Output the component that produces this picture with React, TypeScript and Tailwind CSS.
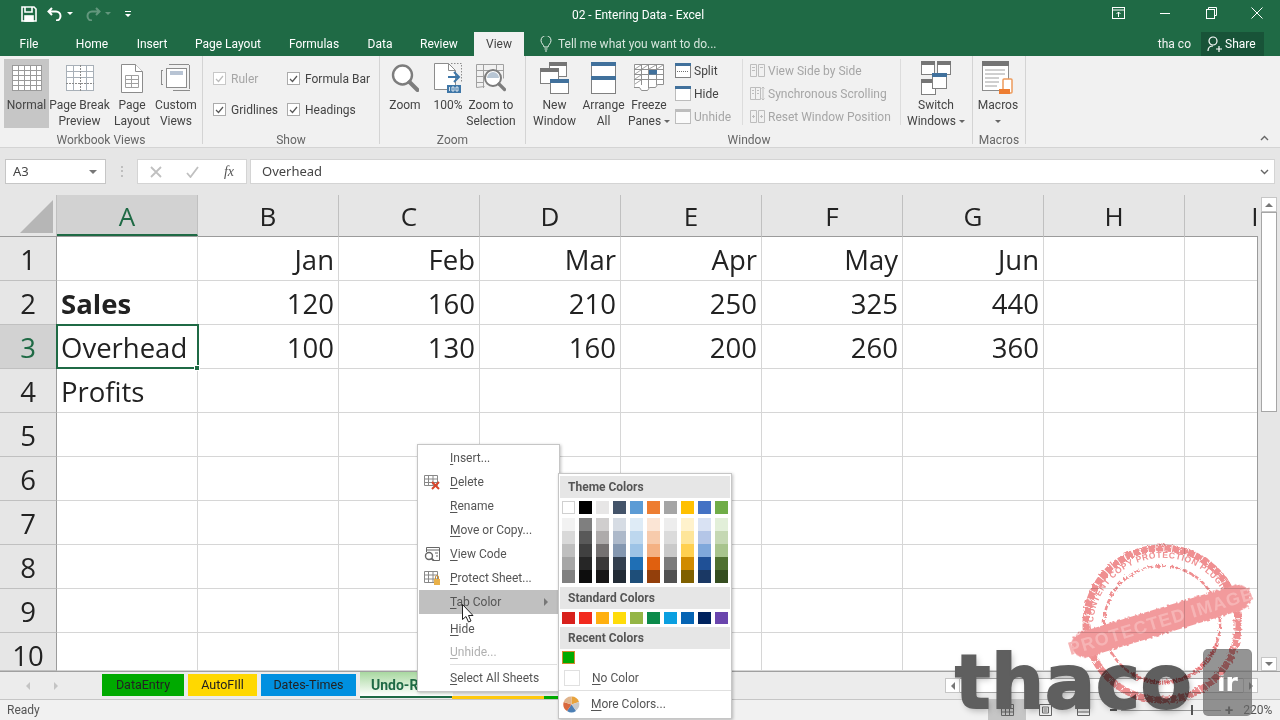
import type { ReactNode } from "react";

const columns = ["A", "B", "C", "D", "E", "F", "G", "H", "I"];

const sheetRows = [
  { n: 1, cells: ["", "Jan", "Feb", "Mar", "Apr", "May", "Jun"] },
  { n: 2, cells: ["Sales", "120", "160", "210", "250", "325", "440"] },
  { n: 3, cells: ["Overhead", "100", "130", "160", "200", "260", "360"] },
  { n: 4, cells: ["Profits"] },
  { n: 5, cells: [] },
  { n: 6, cells: [] },
  { n: 7, cells: [] },
  { n: 8, cells: [] },
  { n: 9, cells: [] },
  { n: 10, cells: [] },
];

const themeTop = [
  "bg-[#ffffff] border border-[#d0d0d0]",
  "bg-[#000000]",
  "bg-[#e7e6e6]",
  "bg-[#44546a]",
  "bg-[#5b9bd5]",
  "bg-[#ed7d31]",
  "bg-[#a5a5a5]",
  "bg-[#ffc000]",
  "bg-[#4472c4]",
  "bg-[#70ad47]",
];

const themeShades = [
  ["bg-[#f2f2f2]", "bg-[#d9d9d9]", "bg-[#bfbfbf]", "bg-[#a6a6a6]", "bg-[#808080]"],
  ["bg-[#7f7f7f]", "bg-[#595959]", "bg-[#404040]", "bg-[#262626]", "bg-[#0d0d0d]"],
  ["bg-[#d0cece]", "bg-[#aeabab]", "bg-[#757171]", "bg-[#3a3838]", "bg-[#171616]"],
  ["bg-[#d6dce4]", "bg-[#adb9ca]", "bg-[#8497b0]", "bg-[#333f4f]", "bg-[#222b35]"],
  ["bg-[#deebf6]", "bg-[#bdd7ee]", "bg-[#9dc3e6]", "bg-[#1f6fb5]", "bg-[#1e4e79]"],
  ["bg-[#fbe5d5]", "bg-[#f7cbac]", "bg-[#f4b183]", "bg-[#e0600f]", "bg-[#933f0b]"],
  ["bg-[#ededed]", "bg-[#dbdbdb]", "bg-[#c9c9c9]", "bg-[#7b7b7b]", "bg-[#525252]"],
  ["bg-[#fff2cc]", "bg-[#fee599]", "bg-[#ffd050]", "bg-[#d08a00]", "bg-[#7f6000]"],
  ["bg-[#d9e2f3]", "bg-[#b4c6e7]", "bg-[#7fa8db]", "bg-[#1f5096]", "bg-[#1a3864]"],
  ["bg-[#e2efd9]", "bg-[#c5d8b3]", "bg-[#a8c48d]", "bg-[#4f7030]", "bg-[#354d20]"],
];

const standardColors = [
  "bg-[#d8201c]",
  "bg-[#f22a1e]",
  "bg-[#ffb010]",
  "bg-[#ffdc0a]",
  "bg-[#94b545]",
  "bg-[#0b8a4a]",
  "bg-[#0a9fe0]",
  "bg-[#0564b4]",
  "bg-[#00235f]",
  "bg-[#6a45ad]",
];

function GridIcon() {
  return (
    <svg width="30" height="26" viewBox="0 0 30 26" fill="none" stroke="#9a9a9a">
      <rect x="0.5" y="0.5" width="29" height="25" fill="#fff" />
      <path d="M0 5.5h30M0 10.5h30M0 15.5h30M0 20.5h30M6.5 0v26M12.5 0v26M18.5 0v26M24.5 0v26" strokeWidth="1" />
    </svg>
  );
}

function PageBreakIcon() {
  return (
    <svg width="28" height="26" viewBox="0 0 28 26" fill="none" stroke="#a8b0b8">
      <rect x="0.5" y="0.5" width="27" height="25" fill="#fff" />
      <path d="M0 6.5h28M0 12.5h28M7.5 0v26M20.5 0v26" />
      <path d="M0 18.5h28M14.5 0v26" stroke="#8a8a8a" strokeDasharray="2 1" />
    </svg>
  );
}

function PageIcon() {
  return (
    <svg width="22" height="29" viewBox="0 0 22 29" fill="#fff" stroke="#8c8c8c">
      <path d="M0.5 0.5h14l7 7v21h-21z" />
      <path d="M14.5 0.5v7h7" />
      <path d="M4.5 11.5h13v12h-13zM4.5 15.5h13M4.5 19.5h13M10.5 11.5v12" fill="none" stroke="#a0a0a0" />
    </svg>
  );
}

function CustomViewsIcon() {
  return (
    <svg width="30" height="28" viewBox="0 0 30 28" fill="none" stroke="#8c8c8c">
      <path d="M0.5 6v15M0 6.5h2M0 20.5h2M8 0.5h20M28.5 1v24M12 26.5h17" />
      <rect x="5.5" y="4.5" width="20" height="19" fill="#fff" />
      <rect x="9" y="7" width="13" height="4" fill="#b8c4d4" stroke="none" />
    </svg>
  );
}

function MagnifierIcon() {
  return (
    <svg width="28" height="28" viewBox="0 0 28 28" fill="none">
      <circle cx="11.5" cy="11" r="9.5" stroke="#7d7d7d" strokeWidth="2.4" fill="#fff" />
      <path d="M18.5 18l8 8" stroke="#7d7d7d" strokeWidth="4" strokeLinecap="round" />
    </svg>
  );
}

function HundredIcon() {
  return (
    <svg width="28" height="30" viewBox="0 0 28 30" fill="none">
      <path d="M0.5 0.5h14l7 7v19h-21z" fill="#fff" stroke="#8c8c8c" />
      <path d="M14.5 0.5v7h7" stroke="#8c8c8c" />
      <path d="M17 0.5h10.5v18" stroke="#8c8c8c" strokeDasharray="1.5 1.5" />
      <path d="M14 14h11M20 9l5 5-5 5" stroke="#3f77a8" strokeWidth="2" />
      <rect x="13" y="22" width="14" height="8" fill="#3f77a8" />
      <path d="M15.5 24v4M18 24h2v4h-2zM22 24h2v4h-2z" stroke="#fff" strokeWidth="0.8" />
    </svg>
  );
}

function ZoomSelectionIcon() {
  return (
    <svg width="30" height="28" viewBox="0 0 30 28" fill="none">
      <path d="M0.5 0.5h27v14M0.5 0.5v23l8-1M0 6.5h28M7.5 0v24M0 12.5h10M0 18.5h8M20.5 0v6" stroke="#a0a0a0" />
      <circle cx="17" cy="14" r="8" fill="#fff" stroke="#7d7d7d" strokeWidth="2" />
      <path d="M11 14a6 6 0 0112 0z" fill="#b8c6d4" />
      <path d="M23 20l5.5 5.5" stroke="#7d7d7d" strokeWidth="3.2" strokeLinecap="round" />
    </svg>
  );
}

function NewWindowIcon() {
  return (
    <svg width="30" height="32" viewBox="0 0 30 32" fill="none">
      <rect x="9.5" y="0.5" width="17" height="14" fill="#fff" stroke="#808080" />
      <rect x="9" y="0" width="18" height="4" fill="#757575" />
      <rect x="0.5" y="6.5" width="18" height="15" fill="#fff" stroke="#808080" />
      <rect x="0" y="6" width="19" height="4" fill="#757575" />
      <rect x="10.5" y="17.5" width="18" height="14" fill="#fff" stroke="#808080" />
      <rect x="10" y="17" width="19" height="4" fill="#41719c" />
    </svg>
  );
}

function ArrangeIcon() {
  return (
    <svg width="25" height="32" viewBox="0 0 25 32" fill="none">
      <rect x="0.5" y="0.5" width="24" height="31" fill="#fff" stroke="#808080" />
      <rect x="0" y="0" width="25" height="4" fill="#41719c" />
      <rect x="0" y="14" width="25" height="4" fill="#41719c" />
    </svg>
  );
}

function FreezeIcon() {
  return (
    <svg width="30" height="28" viewBox="0 0 30 28" fill="none" stroke="#909090">
      <path d="M0.5 0.5h29v20h-6l-2 3h-6l-2 3h-6l-2-3h-5.5z" fill="#fff" />
      <path d="M0 5.5h30M0 10.5h30M0 15.5h30M7.5 0v21M14.5 0v24M22.5 0v21" />
      <path d="M1 5l6-4M8 5l6-4M15 5l7-4M23 5l6-4M1 10l6-4M1 15l6-4M1 20l6-4" stroke="#a0a0a0" />
      <rect x="15" y="6" width="8" height="4.5" fill="#41719c" stroke="none" />
    </svg>
  );
}

function SplitIcon() {
  return (
    <svg width="16" height="15" viewBox="0 0 16 15" fill="none">
      <rect x="0.5" y="0.5" width="15" height="14" fill="#fff" stroke="#808080" />
      <rect x="0" y="0" width="16" height="3" fill="#41719c" />
      <path d="M2 8.5h12" stroke="#707070" strokeDasharray="1 1" />
    </svg>
  );
}

function HideIcon() {
  return (
    <svg width="16" height="15" viewBox="0 0 16 15" fill="none">
      <rect x="0.5" y="0.5" width="15" height="14" fill="#fff" stroke="#808080" strokeDasharray="1 1" />
      <rect x="0" y="0" width="16" height="3" fill="#41719c" />
    </svg>
  );
}

function UnhideIcon() {
  return (
    <svg width="16" height="15" viewBox="0 0 16 15" fill="none">
      <rect x="0.5" y="0.5" width="15" height="14" fill="#fafafa" stroke="#bdbdbd" />
      <rect x="0" y="0" width="16" height="3" fill="#bdbdbd" />
    </svg>
  );
}

function SideBySideIcon() {
  return (
    <svg width="15" height="13" viewBox="0 0 15 13" fill="none" stroke="#bdbdbd">
      <path d="M0.5 0.5h6v12h-6zM8.5 0.5h6v12h-6zM2 3.5h3M2 6.5h3M10 3.5h3" />
    </svg>
  );
}

function SyncIcon() {
  return (
    <svg width="15" height="15" viewBox="0 0 15 15" fill="none" stroke="#bdbdbd">
      <path d="M0.5 1.5h5v12h-5zM5.5 1.5h5v12h-5zM2 4.5h2M2 7.5h2M7 4.5h2M7 7.5h2M13 1v13M11.5 2.5L13 1l1.5 1.5M11.5 12.5L13 14l1.5-1.5" />
    </svg>
  );
}

function ResetIcon() {
  return (
    <svg width="15" height="13" viewBox="0 0 15 13" fill="none" stroke="#bdbdbd">
      <path d="M0.5 0.5h6v12h-6zM8.5 0.5h6v12h-6zM2 6.5h3M10 6.5h3M11.5 5v3M3.5 5v3" />
    </svg>
  );
}

function SwitchIcon() {
  return (
    <svg width="30" height="34" viewBox="0 0 30 34" fill="none">
      <rect x="0.5" y="0.5" width="13" height="13" fill="#fff" stroke="#808080" />
      <rect x="0" y="0" width="14" height="4" fill="#757575" />
      <rect x="16.5" y="0.5" width="13" height="13" fill="#fff" stroke="#808080" />
      <rect x="16" y="0" width="14" height="4" fill="#757575" />
      <rect x="0.5" y="18.5" width="14" height="15" fill="#fff" stroke="#808080" />
      <rect x="0" y="18" width="15" height="4" fill="#757575" />
      <rect x="11.5" y="12.5" width="14" height="15" fill="#fff" stroke="#808080" />
      <rect x="11" y="12" width="15" height="4" fill="#41719c" />
    </svg>
  );
}

function MacrosIcon() {
  return (
    <svg width="32" height="34" viewBox="0 0 32 34" fill="none">
      <rect x="0.5" y="0.5" width="26" height="29" fill="#fff" stroke="#8c8c8c" />
      <rect x="0" y="0" width="27" height="5" fill="#757575" />
      <path d="M3 9h20M3 13h20M3 17h14M3 21h14M3 25h12" stroke="#a0a0a0" />
      <rect x="21" y="18" width="9" height="14" rx="1" fill="#fff" stroke="#ed9b5c" strokeWidth="1.5" />
      <rect x="17" y="28" width="11" height="5" fill="#ed7d31" />
    </svg>
  );
}

function Dropdown({ light }: { light?: boolean }) {
  return (
    <span
      className={`inline-block w-0 h-0 border-x-[3px] border-x-transparent border-t-[3px] align-middle ${
        light ? "border-t-white" : "border-t-[#666]"
      }`}
    />
  );
}

function BigButton({
  icon,
  lines,
  width,
  active,
}: {
  icon: ReactNode;
  lines: ReactNode[];
  width: string;
  active?: boolean;
}) {
  return (
    <div className={`${width} ${active ? "bg-[#c6c6c6]" : ""} h-[69px] shrink-0 flex flex-col items-center`}>
      <div className="h-[38px] shrink-0 flex items-center justify-center">{icon}</div>
      <div className="text-center leading-[16px] whitespace-nowrap">
        {lines.map((l, i) => (
          <div key={i}>{l}</div>
        ))}
      </div>
    </div>
  );
}

function Group({ label, width, children }: { label: string; width: string; children: ReactNode }) {
  return (
    <div className={`${width} h-[88px] shrink-0 flex flex-col border-r border-[#d4d4d4]`}>
      <div className="h-[72px] shrink-0 pt-[3px] flex">{children}</div>
      <div className="shrink-0 text-center text-[#666] leading-[16px] mt-[4px]">{label}</div>
    </div>
  );
}

function CheckBox({ label, disabled }: { label: string; disabled?: boolean }) {
  return (
    <div className={`flex items-center gap-[5px] ${disabled ? "text-[#a6a6a6]" : ""}`}>
      <span
        className={`w-[13px] h-[13px] bg-white border flex items-center justify-center ${
          disabled ? "border-[#c8c8c8]" : "border-[#ababab]"
        }`}
      >
        <svg width="9" height="8" viewBox="0 0 9 8" fill="none" stroke={disabled ? "#bbb" : "#555"} strokeWidth="1.2">
          <path d="M1 4l2.5 2.5L8 1" />
        </svg>
      </span>
      {label}
    </div>
  );
}

function SmallRow({ icon, label, disabled }: { icon: ReactNode; label: string; disabled?: boolean }) {
  return (
    <div className={`h-[23px] flex items-center gap-[3px] whitespace-nowrap ${disabled ? "text-[#a6a6a6]" : ""}`}>
      <span className="w-[16px] flex justify-center">{icon}</span>
      {label}
    </div>
  );
}

function Ribbon() {
  return (
    <div className="h-[92px] bg-[#f1f1f1] border-b border-[#d4d4d4] flex text-[12px] text-[#444]">
      <Group label="Workbook Views" width="w-[203px]">
        <div className="flex pl-[4px]">
          <BigButton width="w-[45px]" active icon={<GridIcon />} lines={["Normal"]} />
          <BigButton width="w-[61px]" icon={<PageBreakIcon />} lines={["Page Break", "Preview"]} />
          <BigButton width="w-[44px]" icon={<PageIcon />} lines={["Page", "Layout"]} />
          <BigButton width="w-[44px]" icon={<CustomViewsIcon />} lines={["Custom", "Views"]} />
        </div>
      </Group>
      <Group label="Show" width="w-[177px]">
        <div className="grid grid-cols-[74px_auto] grid-rows-[31px_31px] items-center pl-[10px] pt-[4px]">
          <CheckBox label="Ruler" disabled />
          <CheckBox label="Formula Bar" />
          <CheckBox label="Gridlines" />
          <CheckBox label="Headings" />
        </div>
      </Group>
      <Group label="Zoom" width="w-[146px]">
        <div className="flex">
          <BigButton width="w-[50px]" icon={<MagnifierIcon />} lines={["Zoom"]} />
          <BigButton width="w-[36px]" icon={<HundredIcon />} lines={["100%"]} />
          <BigButton width="w-[50px]" icon={<ZoomSelectionIcon />} lines={["Zoom to", "Selection"]} />
        </div>
      </Group>
      <Group label="Window" width="w-[447px]">
        <div className="flex">
          <BigButton width="w-[57px]" icon={<NewWindowIcon />} lines={["New", "Window"]} />
          <BigButton width="w-[41px]" icon={<ArrangeIcon />} lines={["Arrange", "All"]} />
          <BigButton
            width="w-[50px]"
            icon={<FreezeIcon />}
            lines={[
              "Freeze",
              <>
                Panes <Dropdown />
              </>,
            ]}
          />
          <div className="w-[67px] shrink-0 ml-[1px]">
            <SmallRow icon={<SplitIcon />} label="Split" />
            <SmallRow icon={<HideIcon />} label="Hide" />
            <SmallRow icon={<UnhideIcon />} label="Unhide" disabled />
          </div>
          <div className="w-[159px] shrink-0 h-[66px] border-x border-[#dcdcdc] pl-[6px]">
            <SmallRow icon={<SideBySideIcon />} label="View Side by Side" disabled />
            <SmallRow icon={<SyncIcon />} label="Synchronous Scrolling" disabled />
            <SmallRow icon={<ResetIcon />} label="Reset Window Position" disabled />
          </div>
          <BigButton
            width="w-[70px]"
            icon={<SwitchIcon />}
            lines={[
              "Switch",
              <>
                Windows <Dropdown />
              </>,
            ]}
          />
        </div>
      </Group>
      <Group label="Macros" width="w-[53px]">
        <BigButton width="w-[50px]" icon={<MacrosIcon />} lines={["Macros", <Dropdown />]} />
      </Group>
      <div className="flex-1 flex items-end justify-end pr-[11px] pb-[6px]">
        <svg width="9" height="6" viewBox="0 0 9 6" fill="none" stroke="#666" strokeWidth="1.4">
          <path d="M1 5l3.5-3.5L8 5" />
        </svg>
      </div>
    </div>
  );
}

function TitleBar() {
  return (
    <div className="h-[32px] grid grid-cols-[1fr_auto_1fr] text-white">
      <div className="flex items-center pb-[5px] pl-[21px] gap-[10px]">
        <svg width="16" height="16" viewBox="0 0 16 16" fill="none" stroke="#fff" strokeWidth="1.6">
          <path d="M1 1h12l2 2v12H1z" />
          <path d="M4 1v5h7V1" />
          <rect x="4" y="10" width="8" height="5" fill="#fff" />
        </svg>
        <div className="flex items-center gap-[4px]">
          <svg width="16" height="14" viewBox="0 0 16 14" fill="none" stroke="#fff" strokeWidth="2">
            <path d="M5 1L1.5 4.5 5 8M2 4.5h7a4.5 4.5 0 010 9" />
          </svg>
          <Dropdown light />
        </div>
        <div className="flex items-center gap-[4px] opacity-30 ml-[2px]">
          <svg width="16" height="14" viewBox="0 0 16 14" fill="none" stroke="#fff" strokeWidth="2">
            <path d="M11 1l3.5 3.5L11 8M14 4.5H7a4.5 4.5 0 000 9" />
          </svg>
          <Dropdown light />
        </div>
        <svg className="ml-[3px]" width="8" height="8" viewBox="0 0 8 8" fill="#fff">
          <path d="M1 1h6v1H1zM1 4h6L4 7z" />
        </svg>
      </div>
      <div className="text-[12px] leading-[30px] pr-[4px]">02 - Entering Data - Excel</div>
      <div className="flex items-start justify-end text-white">
        <div className="w-[46px] h-[26px] flex items-center justify-center mr-[1px]">
          <svg width="13" height="12" viewBox="0 0 13 12" fill="none" stroke="#fff">
            <rect x="0.5" y="0.5" width="12" height="11" />
            <path d="M0 3h13M6.5 10V5M4.5 7l2-2 2 2" />
          </svg>
        </div>
        <div className="w-[46px] h-[26px] flex items-center justify-center">
          <div className="w-[10px] h-px bg-white" />
        </div>
        <div className="w-[46px] h-[26px] flex items-center justify-center">
          <svg width="11" height="12" viewBox="0 0 11 12" fill="none" stroke="#fff">
            <rect x="0.5" y="2.5" width="8" height="9" />
            <path d="M2.5 2V0.5h8v8H9" />
          </svg>
        </div>
        <div className="w-[46px] h-[26px] flex items-center justify-center">
          <svg width="12" height="12" viewBox="0 0 12 12" stroke="#fff">
            <path d="M0.5 0.5l11 11M11.5 0.5l-11 11" />
          </svg>
        </div>
      </div>
    </div>
  );
}

function TabRow() {
  const tabs = [
    { name: "File", w: "w-[58px]" },
    { name: "Home", w: "w-[56px]" },
    { name: "Insert", w: "w-[56px]" },
    { name: "Page Layout", w: "w-[88px]" },
    { name: "Formulas", w: "w-[76px]" },
    { name: "Data", w: "w-[48px]" },
    { name: "Review", w: "w-[62px]" },
  ];
  return (
    <div className="h-[24px] flex text-[12px] text-white">
      {tabs.map((t, i) => (
        <div key={t.name} className={`${t.w} ${i === 0 ? "mr-[6px]" : "mr-[4px]"} text-center leading-[24px]`}>
          {t.name}
        </div>
      ))}
      <div className="w-[50px] bg-[#f1f1f1] text-[#444] text-center leading-[24px]">View</div>
      <div className="flex items-center ml-[16px] gap-[6px] text-[#d5e5dc]">
        <svg width="12" height="16" viewBox="0 0 12 16" fill="none" stroke="#e6efe9">
          <path d="M4 11c0-2-3-3.5-3-6.5a5 5 0 0110 0C11 7.5 8 9 8 11zM4.5 13h3M5 15h2" />
        </svg>
        Tell me what you want to do...
      </div>
      <div className="ml-auto mr-[10px] leading-[24px] text-[#f2f2f2]">tha co</div>
      <div className="w-[63px] h-[24px] mr-[16px] bg-[#185338] flex items-center pl-[6px] gap-[3px]">
        <svg width="15" height="16" viewBox="0 0 15 16" fill="none" stroke="#fff" strokeWidth="1.2">
          <circle cx="6" cy="5" r="4" />
          <path d="M1 15c0-3.5 2-5 5-5M9 13h6M12 10v6" />
        </svg>
        Share
      </div>
    </div>
  );
}

function FormulaBar() {
  return (
    <div className="h-[47px] bg-[#e6e6e6] shrink-0 flex items-start pt-[11px] pl-[5px] pr-[5px] font-['Noto_Sans',sans-serif] text-[13px] text-[#444]">
      <div className="w-[101px] h-[25px] bg-white border border-[#c6c6c6] flex items-center justify-between pl-[7px] pr-[8px]">
        A3
        <span className="w-0 h-0 border-x-[4px] border-x-transparent border-t-[4px] border-t-[#777]" />
      </div>
      <div className="w-[31px] flex justify-center text-[#aaa] leading-[24px] text-[12px]">⋮</div>
      <div className="w-[110px] h-[25px] bg-white border border-[#d4d4d4] flex items-center px-[12px] justify-between">
        <svg width="12" height="12" viewBox="0 0 12 12" stroke="#c0c0c0" strokeWidth="1.8">
          <path d="M1 1l10 10M11 1L1 11" />
        </svg>
        <svg width="13" height="12" viewBox="0 0 13 12" fill="none" stroke="#c0c0c0" strokeWidth="1.8">
          <path d="M1 7l3.5 4L12 1" />
        </svg>
        <span className="font-['Liberation_Serif',serif] italic text-[14px] text-[#555]">fx</span>
      </div>
      <div className="flex-1 ml-[3px] h-[25px] bg-white border border-[#d4d4d4] flex items-center justify-between pl-[11px] pr-[5px]">
        Overhead
        <svg width="9" height="6" viewBox="0 0 9 6" fill="none" stroke="#666" strokeWidth="1.4">
          <path d="M1 1l3.5 3.5L8 1" />
        </svg>
      </div>
    </div>
  );
}

function Sheet() {
  return (
    <div className="flex h-[476px] bg-[#e6e6e6] shrink-0 font-['Open_Sans',sans-serif]">
      <div className="w-[1258px] shrink-0 flex flex-col overflow-hidden">
        <div className="h-[41px] shrink-0 flex text-[26px] text-[#222] leading-[43px]">
          <div className="w-[57px] shrink-0 flex items-end justify-end pr-[3px] pb-[3px] border-r border-[#c0c0c0]">
            <span className="w-0 h-0 border-l-[33px] border-l-transparent border-b-[33px] border-b-[#b6b6b6]" />
          </div>
          {columns.map((c, i) => (
            <div
              key={c}
              className={`w-[141px] shrink-0 text-center border-r border-[#c0c0c0] ${
                i === 0 ? "bg-[#d2d2d2] text-[#1f6a45] border-b-2 border-b-[#1f6a45]" : ""
              }`}
            >
              {c}
            </div>
          ))}
        </div>
        <div className="flex-1 flex flex-col border-r border-[#9b9b9b] w-[1258px] overflow-hidden">
          {sheetRows.map((r) => (
            <div
              key={r.n}
              className={`${r.n === 1 ? "h-[45px]" : r.n === 10 ? "h-[38px]" : "h-[44px]"} shrink-0 flex text-[27.5px] text-[#222] ${
                r.n === 10 ? "leading-[30px]" : "leading-[46px]"
              }`}
            >
              <div
                className={`w-[57px] shrink-0 text-center border-r border-[#9b9b9b] border-b border-b-[#c0c0c0] ${
                  r.n === 1 ? "border-t border-t-[#9b9b9b]" : ""
                } ${r.n === 3 ? "bg-[#d2d2d2] text-[#1f6a45]" : ""} ${r.n === 10 ? "pt-[8px]" : ""}`}
              >
                {r.n}
              </div>
              {columns.map((c, i) => (
                <div
                  key={c}
                  className={`relative w-[141px] shrink-0 bg-white border-r border-b border-[#d6d6d6] ${
                    r.n === 1 ? "border-t border-t-[#9b9b9b]" : ""
                  } ${i === 0 ? "pl-[4px] text-left" : "pr-[4px] text-right"} ${
                    r.n === 2 && i === 0 ? "font-bold" : ""
                  }`}
                >
                  {r.cells[i] ?? ""}
                  {r.n === 3 && i === 0 && (
                    <>
                      <span className="absolute z-10 -left-px -top-px w-[143px] h-[45px] border-2 border-[#1f6a45]" />
                      <span className="absolute z-10 -right-[3px] -bottom-[3px] w-[6px] h-[6px] bg-[#1f6a45] border border-white" />
                    </>
                  )}
                </div>
              ))}
            </div>
          ))}
        </div>
      </div>
      <div className="flex-1 flex flex-col items-center pt-[2px]">
        <div className="w-[16px] h-[15px] bg-white border border-[#c6c6c6] flex items-center justify-center">
          <span className="w-0 h-0 border-x-[4px] border-x-transparent border-b-[4px] border-b-[#777]" />
        </div>
        <div className="w-[16px] h-[200px] bg-white border border-[#a6a6a6]" />
        <div className="flex-1" />
        <div className="w-[16px] h-[14px] bg-white border border-[#c6c6c6] flex items-center justify-center">
          <span className="w-0 h-0 border-x-[4px] border-x-transparent border-t-[4px] border-t-[#777]" />
        </div>
      </div>
    </div>
  );
}

function SheetTab({ name, width, color }: { name: string; width: string; color: string }) {
  return <div className={`${width} ${color} h-[22px] shrink-0 mr-[4px] text-center leading-[22px]`}>{name}</div>;
}

function TabBar() {
  return (
    <div className="h-[28px] shrink-0 bg-[#ececec] border-t border-[#a0a0a0] flex text-[12.5px] text-[#222]">
      <div className="w-[102px] shrink-0 pl-[26px] flex items-center gap-[24px]">
        <span className="w-0 h-0 border-y-[4px] border-y-transparent border-r-[4px] border-r-[#c4c4c4]" />
        <span className="w-0 h-0 border-y-[4px] border-y-transparent border-l-[4px] border-l-[#c4c4c4]" />
      </div>
      <div className="flex pt-[2px] w-[843px] shrink-0 overflow-hidden">
        <SheetTab name="DataEntry" width="w-[82px]" color="bg-[#00aa00]" />
        <SheetTab name="AutoFIll" width="w-[69px]" color="bg-[#ffd800]" />
        <SheetTab name="Dates-Times" width="w-[95px]" color="bg-[#0090e0]" />
        <div className="w-[93px] h-[26px] shrink-0 bg-linear-to-b from-[#a8d8a0] to-white border-b-2 border-[#1f6a45] text-[14px] text-[#1f6a45] font-bold pl-[11px] leading-[22px] -mr-[1px] -mt-[2px] pt-[2px]">
          Undo-Redo
        </div>
        <div className="w-[92px] h-[25px] shrink-0 border-b-[3px] border-[#ffc90e]" />
        <div className="w-[30px] h-[25px] shrink-0 border-b-[3px] border-[#00aa00]" />
      </div>
      <div className="flex-1 flex pt-[6px] pr-[22px]">
        <div className="w-[15px] h-[15px] bg-white border border-[#c6c6c6] flex items-center justify-center">
          <span className="w-0 h-0 border-y-[4px] border-y-transparent border-r-[4px] border-r-[#777]" />
        </div>
        <div className="flex-1 h-[15px] bg-white border-y border-[#a6a6a6]" />
        <div className="w-[15px] h-[15px] bg-white border border-[#c6c6c6] flex items-center justify-center">
          <span className="w-0 h-0 border-y-[4px] border-y-transparent border-l-[4px] border-l-[#777]" />
        </div>
      </div>
    </div>
  );
}

function StatusBar() {
  return (
    <div className="flex-1 bg-[#f1f1f1] border-t border-[#c6c6c6] flex items-center text-[12px] text-[#555]">
      <div className="pl-[7px] w-[988px] shrink-0">Ready</div>
      <div className="w-[38px] h-full bg-[#c6c6c6] flex items-center justify-center">
        <svg width="13" height="12" viewBox="0 0 13 12" fill="none" stroke="#666">
          <path d="M0.5 0.5h12v11h-12zM0 4.5h13M0 8h13M4.5 0v12M8.5 0v12" />
        </svg>
      </div>
      <div className="w-[38px] flex justify-center">
        <svg width="13" height="12" viewBox="0 0 13 12" fill="none" stroke="#666">
          <path d="M0.5 0.5h12v11h-12zM3.5 3h6v6h-6zM4.5 5h4M4.5 7h4" />
        </svg>
      </div>
      <div className="w-[38px] flex justify-center">
        <svg width="13" height="12" viewBox="0 0 13 12" fill="none" stroke="#666">
          <path d="M0.5 4.5h12v7h-12zM3.5 4.5V0.5h6v4M0 8h13" />
        </svg>
      </div>
      <div className="w-[7px] h-[2px] bg-[#555] ml-[8px]" />
      <div className="relative w-[100px] h-px bg-[#999] mx-[4px]">
        <span className="absolute left-[70px] -top-[5px] w-[2px] h-[10px] bg-[#555]" />
      </div>
      <span className="text-[15px] leading-none font-bold">+</span>
      <span className="ml-[10px]">220%</span>
    </div>
  );
}

function MenuItem({
  first,
  rest,
  icon,
  active,
  disabled,
  tall,
}: {
  first: string;
  rest: string;
  icon?: ReactNode;
  active?: boolean;
  disabled?: boolean;
  tall?: boolean;
}) {
  return (
    <div
      className={`relative ${tall ? "h-[26px] pt-[3px]" : "h-[24px]"} flex items-center ${
        active ? "bg-[#c0c0c0]" : ""
      } ${disabled ? "text-[#b0b0b0]" : ""}`}
    >
      <span className="w-[31px] flex justify-center pr-[5px]">{icon}</span>
      <span>
        <span className="underline underline-offset-2">{first}</span>
        {rest}
      </span>
      {active && (
        <span className="absolute right-[10px] w-0 h-0 border-y-[4px] border-y-transparent border-l-[4px] border-l-[#777]" />
      )}
    </div>
  );
}

function ContextMenu() {
  return (
    <div className="absolute left-[417px] top-[444px] w-[143px] h-[248px] bg-white border border-[#c6c6c6] shadow-[1px_1px_3px_rgba(0,0,0,0.25)] pt-[1px] px-px text-[12px] text-[#555]">
      <MenuItem first="I" rest="nsert..." />
      <MenuItem
        first="D"
        rest="elete"
        icon={
          <svg width="17" height="15" viewBox="0 0 17 15" fill="none">
            <path d="M0.5 0.5h13v10h-13zM0 4h14M0 7.5h14M4.5 0v11M9 0v11" stroke="#888" />
            <path d="M8 7l7 7M15 7l-7 7" stroke="#d8452a" strokeWidth="2" />
          </svg>
        }
      />
      <MenuItem first="R" rest="ename" />
      <MenuItem first="M" rest="ove or Copy..." />
      <MenuItem
        first="V"
        rest="iew Code"
        icon={
          <svg width="16" height="14" viewBox="0 0 16 14" fill="none" stroke="#666">
            <path d="M2.5 5V0.5h13v13H10M2 3h14M11 6h3M12 9h2" />
            <circle cx="5" cy="9" r="3.5" strokeWidth="1.4" />
            <path d="M7.5 11.5L10 14" strokeWidth="1.8" />
          </svg>
        }
      />
      <MenuItem
        first="P"
        rest="rotect Sheet..."
        icon={
          <svg width="17" height="15" viewBox="0 0 17 15" fill="none">
            <path d="M0.5 0.5h13v11h-13zM0 4h14M0 8h14M4.5 0v12M9 0v12" stroke="#888" />
            <rect x="10" y="8" width="6" height="6" fill="#e8b048" />
            <path d="M11.5 8V6a1.5 1.5 0 013 0v2" stroke="#c89038" />
          </svg>
        }
      />
      <MenuItem first="T" rest="ab Color" active />
      <MenuItem first="H" rest="ide" tall />
      <MenuItem first="U" rest="nhide..." disabled />
      <div className="h-px bg-[#e0e0e0] ml-[31px] mr-[1px]" />
      <div className="pt-[1px]">
        <MenuItem first="S" rest="elect All Sheets" />
      </div>
      <svg className="absolute left-[44px] top-[159px]" width="12" height="19" viewBox="0 0 12 19">
        <path d="M0.5 0.5v15l3.5-3 2.5 5.5 2.5-1-2.5-5.500h4.500z" fill="#fff" stroke="#222" />
      </svg>
    </div>
  );
}

function ColorHeader({ label }: { label: string }) {
  return (
    <div className="h-[22px] mx-px bg-[#e6e6e6] pl-[8px] font-bold text-[12px] leading-[22px] text-[#555]">{label}</div>
  );
}

function ColorSubmenu() {
  return (
    <div className="absolute left-[558px] top-[473px] w-[174px] h-[246px] bg-white border border-[#c6c6c6] shadow-[1px_1px_3px_rgba(0,0,0,0.25)] pt-[2px] text-[12px] text-[#555]">
      <ColorHeader label="Theme Colors" />
      <div className="flex gap-[4px] pl-[3px] pt-[3px]">
        {themeTop.map((c, i) => (
          <span key={i} className={`${c} w-[13px] h-[13px]`} />
        ))}
      </div>
      <div className="flex gap-[4px] pl-[3px] pt-[4px]">
        {themeShades.map((col, i) => (
          <div key={i} className="w-[13px] flex flex-col">
            {col.map((c) => (
              <span key={c} className={`${c} h-[13px]`} />
            ))}
          </div>
        ))}
      </div>
      <div className="mt-[4px]">
        <ColorHeader label="Standard Colors" />
      </div>
      <div className="flex gap-[4px] pl-[3px] pt-[3px]">
        {standardColors.map((c) => (
          <span key={c} className={`${c} w-[13px] h-[12px]`} />
        ))}
      </div>
      <div className="mt-[3px]">
        <ColorHeader label="Recent Colors" />
      </div>
      <div className="pl-[3px] pt-[2px]">
        <span className="block w-[13px] h-[13px] bg-[#00aa00] border border-[#d08a30]" />
      </div>
      <div className="h-[26px] flex items-center pl-[5px] pt-px">
        <span className="w-[16px] h-[16px] border border-[#e0e0e0] mr-[12px]" />
        <span>
          <span className="underline underline-offset-2">N</span>o Color
        </span>
      </div>
      <div className="h-px bg-[#e0e0e0]" />
      <div className="h-[26px] flex items-center pl-[4px]">
        <svg className="mr-[11px]" width="17" height="17" viewBox="0 0 17 17">
          <path d="M8.5 8.5V0.5A8 8 0 0116 6z" fill="#e8a33c" />
          <path d="M8.5 8.5L16 6a8 8 0 01-3 8.5z" fill="#c9c9c9" />
          <path d="M8.5 8.5L13 15a8 8 0 01-9 0z" fill="#4c7fb5" />
          <path d="M8.5 8.5L4 15a8 8 0 01-3.3-9z" fill="#d8683c" />
          <path d="M8.5 8.5L0.7 6a8 8 0 017.8-5.5z" fill="#e0b48c" />
        </svg>
        <span>
          <span className="underline underline-offset-2">M</span>ore Colors...
        </span>
      </div>
    </div>
  );
}

function Stamp() {
  return (
    <svg
      className="absolute left-[1072px] top-[540px] mix-blend-multiply overflow-visible"
      width="184"
      height="170"
      viewBox="0 0 184 170"
    >
      <defs>
        <filter id="rough">
          <feTurbulence type="fractalNoise" baseFrequency="0.35" numOctaves="2" />
          <feDisplacementMap in="SourceGraphic" scale="5" />
        </filter>
        <path id="arcTop" d="M22 100A70 70 0 0 1 156 62" />
        <path id="arcBottom" d="M59 136A60 60 0 0 0 150 84" />
      </defs>
      <g fill="none" stroke="#ef8f91" filter="url(#rough)">
        <circle cx="90" cy="84" r="76" strokeWidth="7" strokeDasharray="7 1" />
        <circle cx="90" cy="84" r="58" strokeWidth="2.5" strokeDasharray="5 2" />
      </g>
      <text fontFamily="'Liberation Sans', sans-serif" fontSize="8.5" fontWeight="700" fill="#ef8f91" letterSpacing="0.6">
        <textPath href="#arcTop">WP CONTENT COPY PROTECTION PLUGIN</textPath>
      </text>
      <text fontFamily="'Liberation Sans', sans-serif" fontSize="7" fontWeight="700" fill="#e3666a" letterSpacing="0.3">
        <textPath href="#arcBottom">My Website Name &amp; URL Here</textPath>
      </text>
      <g transform="rotate(-17 90 84)">
        <rect x="-3" y="68" width="186" height="26" rx="13" fill="#f29a9c" filter="url(#rough)" />
        <text
          x="90"
          y="87"
          textAnchor="middle"
          fontFamily="'Liberation Sans', sans-serif"
          fontWeight="700"
          fontSize="18"
          letterSpacing="1.2"
          fill="#f6b4b5"
        >
          PROTECTED IMAGE
        </text>
      </g>
    </svg>
  );
}

function Watermark() {
  return (
    <>
      <div className="absolute left-[955px] top-[632px] font-['DejaVu_Sans',sans-serif] font-bold text-[74px] leading-[100px] tracking-[1px] text-[#5f5f5f] [-webkit-text-stroke:2px_#5f5f5f] [text-shadow:2px_3px_6px_rgba(0,0,0,0.25)]">
        thaco
      </div>
      <div className="absolute left-[1203px] top-[649px] w-[49px] h-[67px] rounded-[5px] bg-[#666]/70 border border-[#888]/60 flex items-center justify-center font-['DejaVu_Sans',sans-serif] font-bold text-[25px] text-white">
        ir
      </div>
      <Stamp />
    </>
  );
}

export default function App() {
  return (
    <div className="relative w-[1280px] h-[720px] overflow-hidden flex flex-col bg-[#1f6a45] font-['Roboto',sans-serif]">
      <TitleBar />
      <TabRow />
      <Ribbon />
      <FormulaBar />
      <Sheet />
      <TabBar />
      <StatusBar />
      <ContextMenu />
      <ColorSubmenu />
      <Watermark />
    </div>
  );
}
